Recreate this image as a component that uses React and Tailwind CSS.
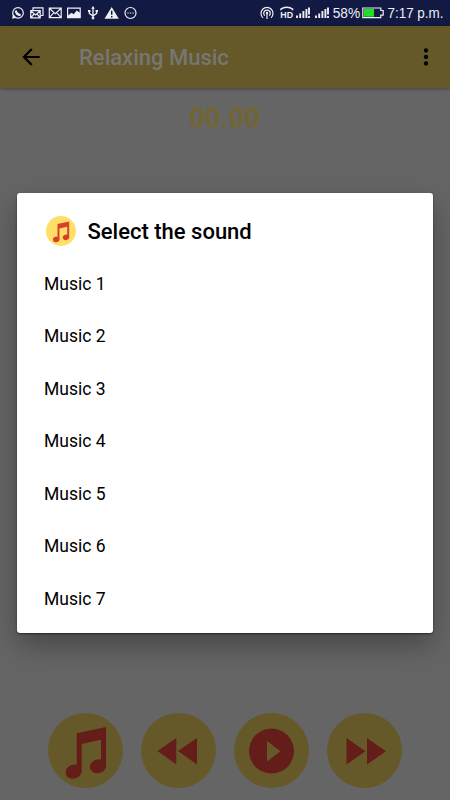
const tracks = ["Music 1", "Music 2", "Music 3", "Music 4", "Music 5", "Music 6", "Music 7"];

function Note({ className }) {
  return (
    <svg viewBox="0 0 75 75" className={className} fill="currentColor">
      <path d="M28.700 20.300 58 14V54H53V26.700L33.700 31V59H28.700Z" />
      <ellipse cx="25.600" cy="58.600" rx="8.200" ry="6.900" transform="rotate(-18 25.600 58.600)" />
      <ellipse cx="50" cy="53.300" rx="8.200" ry="6.900" transform="rotate(-18 50 53.300)" />
    </svg>
  );
}

function StatusBar() {
  return (
    <header className="flex h-[26px] shrink-0 bg-[#121943] text-[#eeeef4]">
      <svg viewBox="0 0 140 26" className="h-[26px] w-[140px]" fill="none" stroke="currentColor" strokeWidth="1.2">
        <circle cx="18" cy="12.900" r="5.300" />
        <path d="M13.300 14.500 12.400 18.400 16 17.600Z" fill="currentColor" strokeWidth="0.500" />
        <path d="M15.800 10.500c.3 2.600 2 4.300 4.800 4.700" strokeWidth="2.200" />
        <path d="M33 10.500V7.800h10v7.700h-2" />
        <path d="M30.700 10.700h9.500v7.100h-9.500zM31 11l4.500 3.900L40 11M31 17.500l3.200-3.600M40 17.500l-3.200-3.600" />
        <path d="M49.300 8.100h11.900v9.600H49.300zM49.600 8.500l5.600 5.200 5.700-5.200M49.600 17.300l4.200-4.700M60.900 17.300l-4.200-4.700" />
        <path d="M67.600 8.200h12.600v9.400H67.600z" />
        <path d="M68 15.500l3.500-2.800 2.200 1.500 3-3.700 3.500 2.500v4.600H68z" fill="currentColor" stroke="none" />
        <path d="M93 7.500V18.500M89.300 11v2.300l3.700 2.700 3.700-2.700V11" strokeWidth="1.300" />
        <path d="M93 6l1.800 2.700h-3.600zM88 10h2.500v2H88zM95.500 10H98v2h-2.500z" fill="currentColor" stroke="none" />
        <circle cx="93" cy="18" r="1.400" fill="currentColor" stroke="none" />
        <path d="M111.700 7 118.800 18.800H104.500Z" fill="currentColor" stroke="none" />
        <path d="M111.700 10.800v4M111.700 16v1.600" stroke="#121943" strokeWidth="1.500" />
        <circle cx="130.500" cy="13" r="5.500" />
        <path d="M127.300 13h1.400M129.800 13h1.400M132.300 13h1.400" />
      </svg>
      <svg viewBox="250 0 200 26" className="ml-auto h-[26px] w-[200px]" fill="none" stroke="currentColor" strokeWidth="1.200">
        <path d="M263 17.900a6 6 0 1 1 8 0M264.700 15.700a3.300 3.300 0 1 1 4.600 0M267 13v6" />
        <circle cx="267" cy="13" r="1.200" fill="currentColor" stroke="none" />
        <path d="M281 10.300V9c3-2.400 8.500-2.400 11.500 0v1.300" strokeWidth="1.600" />
        <text x="280.300" y="18.300" fontSize="9.500" textLength="12.800" lengthAdjust="spacingAndGlyphs" fontFamily="Liberation Sans, sans-serif" fontWeight="700" fill="currentColor" stroke="none">HD</text>
        <path d="M297 18v-2.500M300.200 18v-4.500M303.400 18v-7M306.400 18V9M309 7.500v7M309 16v2" strokeWidth="1.900" />
        <path d="M316 18v-2.500M319.200 18v-4.500M322.400 18v-7M325.400 18V9M328 7.500v7M328 16v2" strokeWidth="1.900" />
        <text x="332.700" y="18" fontSize="13.800" textLength="27.500" lengthAdjust="spacingAndGlyphs" fontFamily="Liberation Sans, sans-serif" fill="currentColor" stroke="none">58%</text>
        <path d="M362.800 8h18v2.500h2.400v4.600h-2.400v2.600h-18z" />
        <path d="M364 9h10v7.700h-10z" fill="#20df28" stroke="none" />
        <text x="387.500" y="18" fontSize="13.800" textLength="56" lengthAdjust="spacingAndGlyphs" fontFamily="Liberation Sans, sans-serif" fill="currentColor" stroke="none">7:17 p.m.</text>
      </svg>
    </header>
  );
}

function Controls() {
  const disc = "flex size-[75px] items-center justify-center rounded-full bg-[#65592a] text-[#651d1a]";
  return (
    <div className="mt-auto mb-3 ml-12 flex gap-[18px]">
      <button aria-label="Choose music" className={disc}><Note className="size-[75px]" /></button>
      <button aria-label="Rewind" className={disc}>
        <svg viewBox="0 0 75 75" className="size-[75px]" fill="currentColor"><path d="M16.500 38 35.300 25V51.500ZM37 38 56 25V51.500Z" /></svg>
      </button>
      <button aria-label="Play" className={disc}>
        <svg viewBox="0 0 75 75" className="size-[75px]" fill="currentColor"><path fillRule="evenodd" d="M37.500 15.500a22.500 22.500 0 1 0 0 45a22.500 22.500 0 1 0 0-45ZM33 28V48.500L46.500 38.200Z" /></svg>
      </button>
      <button aria-label="Fast forward" className={disc}>
        <svg viewBox="0 0 75 75" className="size-[75px]" fill="currentColor"><path d="M19.500 25V51.500L38.500 38.200ZM40 25V51.500L59 38.200Z" /></svg>
      </button>
    </div>
  );
}

export default function App() {
  return (
    <div className="relative flex h-[800px] w-[450px] flex-col overflow-hidden bg-[#656565] font-[Roboto,sans-serif]">
      <StatusBar />
      <div className="flex h-[62px] shrink-0 items-center bg-[#65592a] shadow-[0_1px_3px_rgba(0,0,0,0.35)]">
        <svg viewBox="0 0 24 24" className="ml-[18px] size-[26px] text-black" fill="currentColor"><path d="M20 11H7.830l5.590-5.590L12 4l-8 8 8 8 1.410-1.410L7.830 13H20z" /></svg>
        <h1 className="ml-[35px] pt-[2px] text-[22px] leading-[28px] font-medium text-[#777672]">Relaxing Music</h1>
        <svg viewBox="0 0 24 24" className="mr-[11px] ml-auto size-[26px] text-black" fill="currentColor"><circle cx="12" cy="6" r="2" /><circle cx="12" cy="12" r="2" /><circle cx="12" cy="18" r="2" /></svg>
      </div>
      <div className="mt-[13px] pr-px text-center text-[27.500px] leading-[34px] font-bold text-[#73652f]">00.00</div>
      <Controls />
      <section role="dialog" aria-label="Select the sound" className="absolute top-[193px] left-[17px] h-[440px] w-[416px] rounded-[3px] bg-white text-black shadow-[0_12px_28px_rgba(0,0,0,0.3),0_1px_2px_rgba(0,0,0,0.5)]">
        <div className="flex h-[64px] items-center pt-[11px] pl-[29px]">
          <div className="size-[30px] rounded-full bg-[#ffdf68] text-[#d7412c]"><Note className="size-[30px]" /></div>
          <h2 className="ml-[11.500px] pt-[2px] text-[22px] leading-[28px] font-medium">Select the sound</h2>
        </div>
        <ul>
          {tracks.map((track) => (
            <li key={track} className="flex h-[52.500px] items-center pt-px pl-[27px] text-[17.500px]">{track}</li>
          ))}
        </ul>
      </section>
    </div>
  );
}
